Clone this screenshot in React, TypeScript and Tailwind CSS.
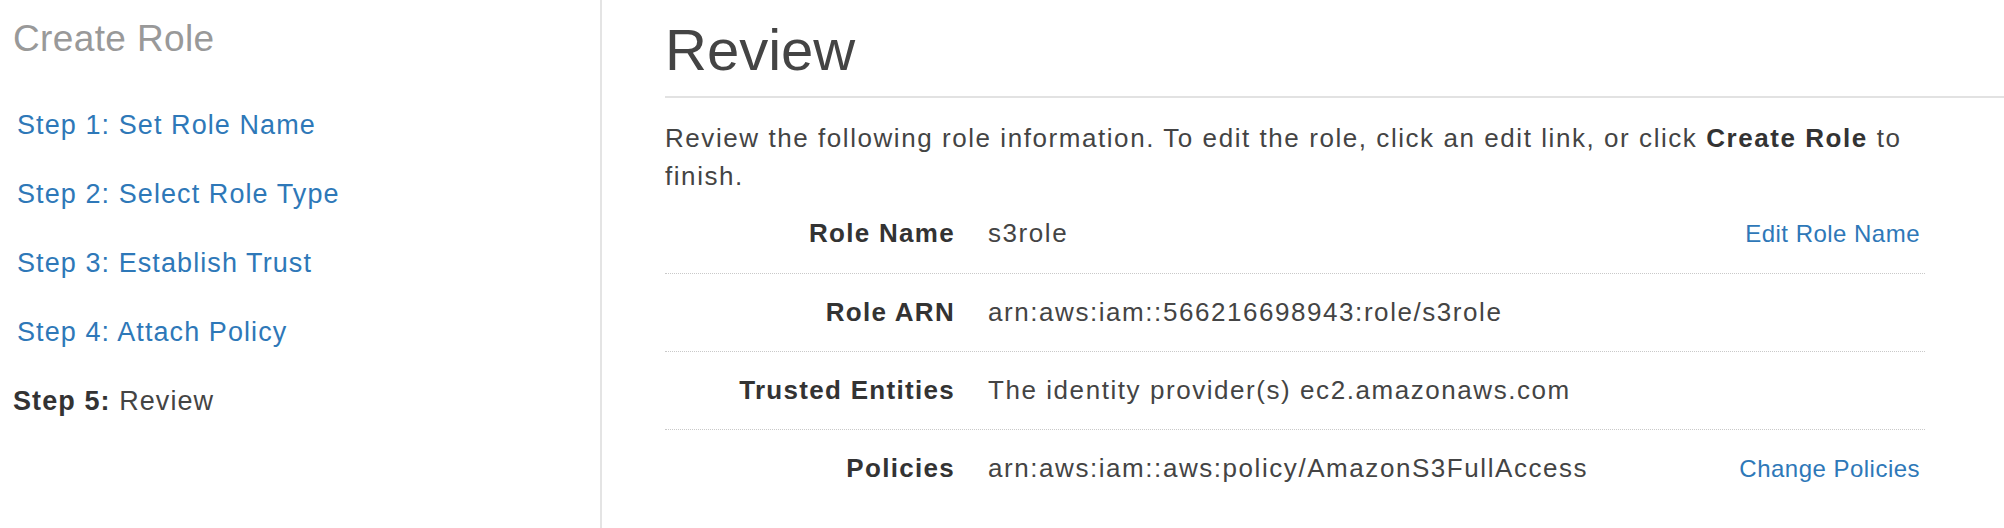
import React from "react";

const steps = [
  "Step 1: Set Role Name",
  "Step 2: Select Role Type",
  "Step 3: Establish Trust",
  "Step 4: Attach Policy",
];

const rows = [
  { label: "Role Name", value: "s3role", link: "Edit Role Name" },
  { label: "Role ARN", value: "arn:aws:iam::566216698943:role/s3role" },
  {
    label: "Trusted Entities",
    value: "The identity provider(s) ec2.amazonaws.com",
  },
  {
    label: "Policies",
    value: "arn:aws:iam::aws:policy/AmazonS3FullAccess",
    link: "Change Policies",
  },
];

export default function App() {
  return (
    <div className="flex h-[528px] w-full overflow-hidden bg-white font-['Liberation_Sans',Arial,sans-serif]">
      {/* sidebar */}
      <div className="w-[602px] shrink-0 border-r-2 border-[#e4e4e4] pl-[13px] pt-[19px]">
        <h2 className="text-[37px] leading-[40px] tracking-[0.01em] text-[#999999]">
          Create Role
        </h2>
        <ul className="mt-[32px]">
          {steps.map((s) => (
            <li key={s} className="pl-[4px] text-[27px] leading-[69px] tracking-[0.04em] text-[#2e78b8]">
              {s}
            </li>
          ))}
          <li className="text-[27px] leading-[69px] tracking-[0.04em] text-[#444]">
            <span className="font-bold text-[#333]">Step 5:</span> Review
          </li>
        </ul>
      </div>

      {/* main */}
      <div className="min-w-0 flex-1 pl-[63px] pt-[21px]">
        <h1 className="border-b-2 border-[#e2e2e2] pb-[17px] text-[58px] leading-[58px] text-[#444]">
          Review
        </h1>
        <p className="mt-[21px] w-[1262px] text-[26px] leading-[38px] tracking-[0.06em] text-[#444]">
          Review the following role information. To edit the role, click an
          edit link, or click <b className="text-[#333]">Create Role</b> to
          finish.
        </p>
        <div className="w-[1260px]">
          {rows.map((r, i) => (
            <div
              key={r.label}
              className={
                "flex items-baseline pt-[23px] pb-[24px] " +
                (i < rows.length - 1 ? "border-b border-dotted border-[#c9c9c9]" : "")
              }
            >
              <div className="w-[290px] shrink-0 text-right text-[26px] leading-[30px] font-bold tracking-[0.05em] text-[#333]">
                {r.label}
              </div>
              <div className="flex-1 pl-[33px] text-[26px] leading-[30px] tracking-[0.06em] text-[#444]">
                {r.value}
              </div>
              {r.link && (
                <a className="pr-[5px] text-[24px] leading-[30px] tracking-[0.02em] text-[#2e78b8]">
                  {r.link}
                </a>
              )}
            </div>
          ))}
        </div>
      </div>
    </div>
  );
}
